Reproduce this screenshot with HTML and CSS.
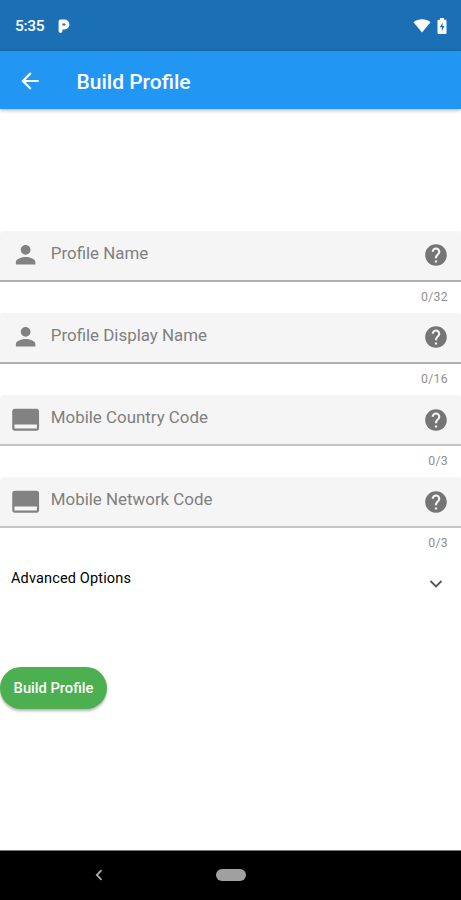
FILE: index.html
```
<!DOCTYPE html>
<html lang="en">
<head>
<meta charset="utf-8">
<title>Build Profile</title>
<link rel="stylesheet" href="styles.css">
</head>
<body>
<svg class="defs" aria-hidden="true">
  <symbol id="person" viewBox="0 0 24 24"><path d="M12 12c2.21 0 4-1.79 4-4s-1.79-4-4-4-4 1.79-4 4 1.79 4 4 4zm0 2c-2.67 0-8 1.34-8 4v2h16v-2c0-2.66-5.33-4-8-4z"/></symbol>
  <symbol id="card" viewBox="0 0 24 24"><path d="M21 3H3c-1.100 0-2 .9-2 2v14c0 1.100 .9 2 2 2h18c1.100 0 2-.9 2-2V5c0-1.100-.9-2-2-2zm.2 16.300H2.800v-3.300h18.400v3.300z"/></symbol>
  <symbol id="help" viewBox="0 0 24 24"><path d="M12 2C6.480 2 2 6.480 2 12s4.480 10 10 10 10-4.480 10-10S17.520 2 12 2zm1 17h-2v-2h2v2zm2.070-7.750l-.9.920C13.450 12.900 13 13.500 13 15h-2v-.5c0-1.100.45-2.100 1.170-2.830l1.240-1.260c.370-.360.590-.860.590-1.410 0-1.100-.9-2-2-2s-2 .9-2 2H8c0-2.210 1.790-4 4-4s4 1.790 4 4c0 .880-.360 1.680-.930 2.250z"/></symbol>
</svg>
<div class="screen">
  <div class="status">
    <span class="time">5:35</span>
    <svg class="parking" viewBox="0 0 12 14"><path d="M2.500 12V2.500H6.500a2.900 2.900 0 0 1 0 6H3" fill="none" stroke="#fff" stroke-width="3.800" stroke-linecap="round" stroke-linejoin="round"/></svg>
    <svg class="wifi" viewBox="0 0 18 14"><path d="M.5 3.200C5.500-.6 12.500-.6 17.500 3.200L9 13.600z" fill="#fff"/></svg>
    <svg class="battery" viewBox="0 0 10 16"><path d="M3 0h4v1.700h1.500q1 0 1 1V15q0 1-1 1h-7q-1 0-1-1V2.700q0-1 1-1H3z" fill="#fff"/><path d="M5.800 4.500L2.800 9.300h2v4l2.700-5.200h-2z" fill="#1b70b5"/></svg>
  </div>
  <header class="appbar">
    <svg class="back" viewBox="0 0 24 24"><path d="M20 11H7.830l5.590-5.590L12 4l-8 8 8 8 1.410-1.410L7.830 13H20v-2z"/></svg>
    <h1>Build Profile</h1>
  </header>
  <main>
    <section class="row">
      <div class="field"><svg class="lead"><use href="#person"/></svg><label>Profile Name</label><svg class="help"><use href="#help"/></svg></div>
      <div class="count">0/32</div>
    </section>
    <section class="row">
      <div class="field"><svg class="lead"><use href="#person"/></svg><label>Profile Display Name</label><svg class="help"><use href="#help"/></svg></div>
      <div class="count">0/16</div>
    </section>
    <section class="row">
      <div class="field light"><svg class="lead"><use href="#card"/></svg><label>Mobile Country Code</label><svg class="help"><use href="#help"/></svg></div>
      <div class="count">0/3</div>
    </section>
    <section class="row">
      <div class="field light"><svg class="lead"><use href="#card"/></svg><label>Mobile Network Code</label><svg class="help"><use href="#help"/></svg></div>
      <div class="count">0/3</div>
    </section>
    <div class="advanced">
      <span>Advanced Options</span>
      <svg class="chevron" viewBox="0 0 14 10"><path d="M1.500 2L7 7.500 12.500 2" fill="none" stroke="#555" stroke-width="1.800"/></svg>
    </div>
    <button class="build">Build Profile</button>
  </main>
  <nav class="navbar">
    <svg class="navback" viewBox="0 0 8 12"><path d="M6.500 1.200L1.800 6l4.700 4.800" fill="none" stroke="#aaa" stroke-width="1.800"/></svg>
    <span class="home"></span>
  </nav>
</div>
</body>
</html>
```
FILE: styles.css
```
* { box-sizing: border-box; }
body { margin: 0; font-family: Roboto, "Liberation Sans", sans-serif; background: #fff; }
.defs { position: absolute; width: 0; height: 0; }
.screen { width: 461px; height: 900px; display: flex; flex-direction: column; overflow: hidden; }
svg { display: block; flex: none; }
.status { height: 51px; background: #1b70b5; display: flex; align-items: center; padding: 1px 14px 0 15px; color: #fff; }
.time { font-size: 15.500px; font-weight: 500; letter-spacing: -0.3px; width: 43px; line-height: 20px; }
.parking { width: 12px; height: 14px; overflow: visible; }
.wifi { width: 18px; height: 14px; margin-left: auto; margin-right: 6px; }
.battery { width: 10px; height: 16px; }
.appbar { height: 58px; background: #2196f3; display: flex; align-items: center; padding: 2px 0 0 17px; color: #fff; box-shadow: 0 1px 4px rgba(0,0,0,.35); position: relative; }
.back { width: 26px; height: 26px; fill: #fff; margin-right: 33.500px; }
h1 { margin: 0; padding-top: 1px; font-size: 21px; font-weight: 500; line-height: 26px; white-space: nowrap; }
main { flex: 1; padding-top: 121.500px; }
.row { height: 82.200px; }
.field { height: 51px; background: #f5f5f5; border-bottom: 2px solid #b0b0b0; border-radius: 4px 4px 0 0; display: flex; align-items: flex-start; padding: 0 12px 0 11px; }
.field.light { border-bottom-color: #c4c4c4; }
.lead { width: 29.300px; height: 29.300px; margin-top: 9.800px; fill: #828282; }
label { font-size: 16.900px; line-height: 22px; margin: 11.200px auto 0 10.500px; color: #808080; white-space: nowrap; }
.help { width: 26px; height: 26px; margin-top: 11.800px; fill: #757575; }
.count { font-size: 12.300px; line-height: 16px; padding: 7px 13px 0 0; text-align: right; color: #909090; letter-spacing: .3px; }
.advanced { display: flex; justify-content: space-between; padding: 10px 18px 0 11px; height: 107.500px; font-size: 14.500px; font-weight: 400; letter-spacing: .15px; line-height: 20px; color: #000; }
.chevron { width: 14px; height: 10px; margin-top: 10px; }
.build { display: block; width: 107px; height: 42px; border: 0; border-radius: 21px; padding: 1px 0 0; background: #4caf50; color: #fff; font: 500 14.700px/20px Roboto, sans-serif; white-space: nowrap; box-shadow: 0 2px 3px rgba(0,0,0,.3); }
.navbar { height: 50px; background: #000; border-top: 1px solid #777; display: flex; align-items: center; padding: 0 0 1px 95px; }
.navback { width: 8px; height: 12px; }
.home { width: 30px; height: 12px; border-radius: 6px; background: #a0a0a0; margin-left: 113px; }
```
